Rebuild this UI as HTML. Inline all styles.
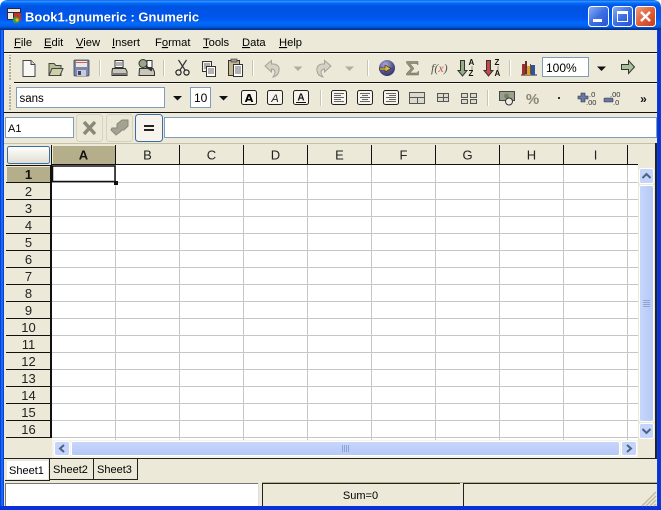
<!DOCTYPE html>
<html><head><meta charset="utf-8"><title>Book1.gnumeric : Gnumeric</title>
<style>
html,body{margin:0;padding:0;width:661px;height:510px;overflow:hidden;background:#fff}
svg{display:block;font-family:"Liberation Sans",sans-serif}
.c{shape-rendering:crispEdges}
.hd{font-size:13px;fill:#222;text-anchor:middle}
.m{font-size:11.2px;fill:#000}
.t{font-size:11px;fill:#000}
</style></head><body>
<svg width="661" height="510" viewBox="0 0 661 510" xmlns="http://www.w3.org/2000/svg">
<defs>
<linearGradient id="tb" x1="0" y1="0" x2="0" y2="1">
<stop offset="0" stop-color="#0058ee"/><stop offset=".04" stop-color="#3593ff"/><stop offset=".06" stop-color="#288eff"/><stop offset=".08" stop-color="#127dff"/><stop offset=".1" stop-color="#036ffc"/><stop offset=".14" stop-color="#0262ee"/><stop offset=".2" stop-color="#0057e5"/><stop offset=".24" stop-color="#0054e3"/><stop offset=".56" stop-color="#0055eb"/><stop offset=".66" stop-color="#005bf5"/><stop offset=".76" stop-color="#026afe"/><stop offset=".86" stop-color="#0062ef"/><stop offset=".92" stop-color="#0052d6"/><stop offset=".94" stop-color="#0040ab"/><stop offset="1" stop-color="#003092"/>
</linearGradient>
<linearGradient id="bl" x1="0" y1="0" x2="1" y2="1"><stop offset="0" stop-color="#8fb0f6"/><stop offset=".5" stop-color="#3c6fe4"/><stop offset="1" stop-color="#2a50d0"/></linearGradient>
<linearGradient id="rd" x1="0" y1="0" x2="1" y2="1"><stop offset="0" stop-color="#f0a080"/><stop offset=".5" stop-color="#e0603a"/><stop offset="1" stop-color="#c83818"/></linearGradient>
<linearGradient id="sbv" x1="0" y1="0" x2="1" y2="0"><stop offset="0" stop-color="#c8d6fb"/><stop offset="1" stop-color="#b4c8f6"/></linearGradient>
<linearGradient id="sbh" x1="0" y1="0" x2="0" y2="1"><stop offset="0" stop-color="#c8d6fb"/><stop offset="1" stop-color="#b4c8f6"/></linearGradient>
<linearGradient id="cb" x1="0" y1="0" x2="0" y2="1"><stop offset="0" stop-color="#fff"/><stop offset="1" stop-color="#e0ddd0"/></linearGradient>
<radialGradient id="gl" cx=".4" cy=".3" r=".8"><stop offset="0" stop-color="#b0b0d8"/><stop offset=".6" stop-color="#50508c"/><stop offset="1" stop-color="#2c2c58"/></radialGradient>
<pattern id="grip" width="3" height="3" patternUnits="userSpaceOnUse"><rect width="2" height="2" fill="#b5b09a"/></pattern>
</defs>

<!-- window frame -->
<path d="M0 30V8Q0 0 8 0H653Q661 0 661 8V30Z" fill="url(#tb)"/>
<g class="c">
<rect x="0" y="30" width="4" height="480" fill="#0a3fdc"/><rect x="1" y="30" width="2" height="476" fill="#166aee"/>
<rect x="657" y="30" width="4" height="480" fill="#0a3fdc"/><rect x="658" y="30" width="2" height="476" fill="#0831d9"/>
<rect x="0" y="506" width="661" height="4" fill="#0831d9"/>
<rect x="4" y="30" width="653" height="476" fill="#ece9d8"/>
</g>
<!-- title -->
<g>
<rect x="7" y="8" width="14" height="12" fill="#2a2a3a"/><rect x="8" y="9" width="12" height="3" fill="#e8e8e8"/><rect x="8" y="13" width="5" height="6" fill="#f0e8e0"/><rect x="14" y="13" width="7" height="8" fill="#c83020"/><circle cx="16" cy="20" r="3.4" fill="#3a9a3a"/><circle cx="17" cy="20" r="1.6" fill="#e8b020"/>
<text x="25.500" y="22" font-size="13" font-weight="bold" fill="#000" opacity=".35">Book1.gnumeric : Gnumeric</text>
<text x="25" y="21.500" font-size="13" font-weight="bold" fill="#fff">Book1.gnumeric : Gnumeric</text>
</g>
<!-- window buttons -->
<rect x="588.500" y="6.500" width="20" height="20" rx="3" fill="url(#bl)" stroke="#fff"/>
<rect x="593" y="19" width="9" height="3" fill="#fff"/>
<rect x="612.500" y="6.500" width="20" height="20" rx="3" fill="url(#bl)" stroke="#fff"/>
<rect x="617.500" y="11.500" width="10" height="10" fill="none" stroke="#fff"/><rect x="617" y="11" width="11" height="3" fill="#fff"/>
<rect x="635.500" y="6.500" width="20" height="20" rx="3" fill="url(#rd)" stroke="#fff"/>
<path d="M641 12L650 21M650 12L641 21" stroke="#fff" stroke-width="2.400"/>

<!-- menu -->
<text class="m" y="46"><tspan x="14"><tspan text-decoration="underline">F</tspan>ile</tspan><tspan x="44"><tspan text-decoration="underline">E</tspan>dit</tspan><tspan x="76"><tspan text-decoration="underline">V</tspan>iew</tspan><tspan x="112"><tspan text-decoration="underline">I</tspan>nsert</tspan><tspan x="155">F<tspan text-decoration="underline">o</tspan>rmat</tspan><tspan x="203"><tspan text-decoration="underline">T</tspan>ools</tspan><tspan x="242"><tspan text-decoration="underline">D</tspan>ata</tspan><tspan x="279"><tspan text-decoration="underline">H</tspan>elp</tspan></text>

<g class="c">
<rect x="4" y="52" width="653" height="1" fill="#111"/>
<rect x="4" y="53" width="653" height="1" fill="#fff" opacity=".6"/>
<rect x="14" y="82" width="643" height="1" fill="#111"/>
<rect x="14" y="83" width="643" height="1" fill="#fff" opacity=".6"/>
<rect x="4" y="112" width="653" height="1" fill="#111"/>
<rect x="8" y="55" width="3" height="25" fill="url(#grip)"/>
<rect x="8" y="85" width="3" height="25" fill="url(#grip)"/>
<g fill="#c8c4ae"><rect x="99" y="60" width="1" height="16"/><rect x="163" y="60" width="1" height="16"/><rect x="252" y="60" width="1" height="16"/><rect x="367" y="60" width="1" height="16"/><rect x="509" y="60" width="1" height="16"/><rect x="487" y="90" width="1" height="16"/><rect x="320" y="90" width="1" height="16"/></g>
<g fill="#fff"><rect x="100" y="60" width="1" height="16"/><rect x="164" y="60" width="1" height="16"/><rect x="253" y="60" width="1" height="16"/><rect x="368" y="60" width="1" height="16"/><rect x="510" y="60" width="1" height="16"/><rect x="321" y="90" width="1" height="16"/><rect x="488" y="90" width="1" height="16"/></g>
</g>

<!-- toolbar 1 icons -->
<path d="M23 60.500H31L35 64.500V76.500H23Z" fill="#f8f8f4" stroke="#444"/><path d="M31 60.500V64.500H35" fill="#ddd" stroke="#444"/>
<path d="M49 63.500H54L56 65.500H61V75.500H49Z" fill="#b8bc94" stroke="#444"/><path d="M49 75.500L52 68.500H63L60 75.500Z" fill="#cdd1a8" stroke="#444"/>
<rect x="74" y="60" width="15" height="16" rx="1" fill="#7888b0" stroke="#444" stroke-width=".8"/><rect x="76" y="61" width="11" height="6" fill="#f0e8e0"/><rect x="76" y="62" width="11" height="1" fill="#d86050"/><rect x="77" y="70" width="9" height="6" fill="#c8ccd8"/><rect x="78" y="71" width="3" height="4" fill="#445"/>
<!-- print -->
<rect x="115" y="60.500" width="8" height="7" fill="#fff" stroke="#333"/><path d="M116 63H122M116 65H122" stroke="#666"/><path d="M112.500 68.500H125.500L127 71.500V75.500H112V71.500Z" fill="#c8c6b8" stroke="#333"/><rect x="113" y="73" width="13" height="2" fill="#777"/>
<!-- preview -->
<path d="M139.500 68.500H153L154.500 72V75.500H139Z" fill="#c8c6b8" stroke="#333"/><rect x="147" y="60.500" width="5" height="7" fill="#fff" stroke="#333"/><circle cx="143" cy="63.500" r="4" fill="#9aa58a" stroke="#333"/><path d="M146 66.500L152 70.500" stroke="#333" stroke-width="2"/>
<!-- cut -->
<path d="M178.500 60L185 70M186.500 60L180 70" stroke="#333" stroke-width="1.200" fill="none"/><circle cx="178.500" cy="72.500" r="2.600" fill="none" stroke="#111" stroke-width="1.100"/><circle cx="186.500" cy="72.500" r="2.600" fill="none" stroke="#111" stroke-width="1.100"/>
<!-- copy -->
<rect x="202.500" y="61.500" width="9" height="10" fill="#f4f2e8" stroke="#333"/><path d="M204 64H210M204 66H210M204 68H210" stroke="#666"/><rect x="206.500" y="66.500" width="9" height="10" fill="#fff" stroke="#333"/><path d="M208 69H214M208 71H214M208 73H214" stroke="#666"/>
<!-- paste -->
<rect x="228.500" y="60.500" width="11" height="15" fill="#c8b890" stroke="#333"/><rect x="231" y="59" width="6" height="3" fill="#999" stroke="#333" stroke-width=".6"/><rect x="233.500" y="64.500" width="9" height="12" fill="#fff" stroke="#333"/><path d="M235 67H241M235 69H241M235 71H241M235 73H241" stroke="#666"/>
<!-- undo / redo -->
<path d="M265 66L271.500 60.500V64H274Q280 65 279 71Q278 76 273 77Q276 73 274.500 70.500Q273.500 69 271.500 69V72Z" fill="#d4d2c4" stroke="#a4a294"/>
<path d="M331 66L324.500 60.500V64H322Q316 65 317 71Q318 76 323 77Q320 73 321.500 70.500Q322.500 69 324.500 69V72Z" fill="#d4d2c4" stroke="#a4a294"/>
<path d="M293.500 66.500H302.500L298 71Z" fill="#b0ae9e"/><path d="M345 66.500H354L349.500 71Z" fill="#b0ae9e"/>
<!-- globe -->
<circle cx="387" cy="68" r="8" fill="url(#gl)"/><path d="M379.500 68H385V65L391 68.500L385 72V70H379.500Z" fill="#e0b830" stroke="#222" stroke-width=".6"/>
<!-- sigma -->
<path d="M406.500 61.500H418V65L416.500 63.500H410L414 68.500L410 73H417L418.500 71V75H406.500V73.500L411 68.500L406.500 63Z" fill="#94927c" stroke="#66644f" stroke-width=".5"/>
<text x="431" y="72" font-family="Liberation Serif,serif" font-size="12" font-style="italic" fill="#55554a">f<tspan>(</tspan><tspan fill="#c05050">x</tspan><tspan>)</tspan></text>
<!-- sort -->
<path d="M460.500 60.500H464.500V70.500H467L462.500 76L458 70.500H460.500Z" fill="#98ac88" stroke="#333"/>
<text x="468.500" y="65" font-size="8" font-weight="bold" fill="#111">A</text><text x="468.500" y="76" font-size="8" font-weight="bold" fill="#111">Z</text><path d="M472 66.500V70" stroke="#333" stroke-dasharray="1 1"/>
<path d="M486.500 60.500H490.500V70.500H493L488.500 76L484 70.500H486.500Z" fill="#c84848" stroke="#333"/>
<text x="494.500" y="65" font-size="8" font-weight="bold" fill="#111">Z</text><text x="494.500" y="76" font-size="8" font-weight="bold" fill="#111">A</text><path d="M498 66.500V70" stroke="#333" stroke-dasharray="1 1"/>
<!-- chart -->
<g class="c"><rect x="521" y="74" width="16" height="2" fill="#888"/><rect x="522" y="64" width="3" height="11" fill="#a03030"/><rect x="525" y="61" width="2" height="13" fill="#603030"/><rect x="527" y="66" width="3" height="9" fill="#e0a020"/><rect x="530" y="64" width="1" height="10" fill="#705020"/><rect x="531" y="65" width="4" height="10" fill="#3050a0"/></g>
<!-- zoom entry -->
<rect x="542.500" y="57.500" width="46" height="19" fill="#fff" stroke="#7f9db9"/>
<text x="546" y="72" font-size="12" fill="#000">100%</text>
<path d="M597 66.500H606L601.500 71Z" fill="#111"/>
<path d="M621.500 64.500H628.500V60.500L634.500 67L628.500 73.500V69.500H621.500Z" fill="#a8c098" stroke="#333"/>

<!-- toolbar 2 -->
<rect x="16.500" y="87.500" width="148" height="20" fill="#fff" stroke="#7f9db9"/>
<text x="19.500" y="102" font-size="11.500" fill="#000">sans</text>
<path d="M173 96H182L177.500 100.500Z" fill="#111"/>
<rect x="190.500" y="87.500" width="20" height="20" fill="#fff" stroke="#7f9db9"/>
<text x="194" y="102" font-size="12" fill="#000">10</text>
<path d="M219 96H228L223.500 100.500Z" fill="#111"/>
<g fill="#f6f4ec" stroke="#222"><rect x="241.500" y="90.500" width="15" height="14" rx="2"/><rect x="267.500" y="90.500" width="15" height="14" rx="2"/><rect x="293.500" y="90.500" width="15" height="14" rx="2"/></g>
<text x="249" y="102" font-size="11" font-weight="bold" text-anchor="middle" fill="#000" font-family="DejaVu Sans,sans-serif">A</text>
<text x="275" y="102" font-size="11" font-style="italic" text-anchor="middle" fill="#222">A</text>
<text x="301" y="100.500" font-size="10" text-anchor="middle" fill="#111" font-weight="bold">A</text><rect x="296" y="102" width="10" height="1" fill="#111" class="c"/>
<g fill="#f6f4ec" stroke="#222"><rect x="331.500" y="90.500" width="15" height="14" rx="2"/><rect x="357.500" y="90.500" width="15" height="14" rx="2"/><rect x="383.500" y="90.500" width="15" height="14" rx="2"/></g>
<g stroke="#666" class="c"><path d="M334 93.500H344M334 95.500H341M334 97.500H344M334 99.500H341M334 101.500H344"/><path d="M360 93.500H370M362 95.500H368M360 97.500H370M362 99.500H368M360 101.500H370"/><path d="M386 93.500H396M389 95.500H396M386 97.500H396M389 99.500H396M386 101.500H396"/></g>
<g class="c" fill="#dcdacc" stroke="#555">
<rect x="409.500" y="92.500" width="15" height="11"/><path d="M409.500 97.500H424.500M417.500 97.500V103.500" fill="none"/>
<rect x="437.500" y="93.500" width="11" height="8"/><path d="M437.500 97.500H448.500M443.500 93.500V101.500" fill="none"/>
<rect x="461.500" y="93.500" width="6" height="4"/><rect x="470.500" y="93.500" width="6" height="4"/><rect x="461.500" y="99.500" width="6" height="4"/><rect x="470.500" y="99.500" width="6" height="4"/>
</g>
<!-- money -->
<rect x="499.500" y="91.500" width="15" height="9" fill="#98a088" stroke="#445"/><circle cx="506.500" cy="96" r="2.500" fill="#787f68"/><circle cx="509" cy="101.500" r="3.500" fill="#f0eee2" stroke="#333"/>
<text x="532.500" y="104" font-size="15" text-anchor="middle" fill="#8a8678" font-weight="bold">%</text>
<rect x="558" y="97" width="2" height="2" fill="#333" class="c"/>
<!-- inc/dec decimals -->
<path d="M578 96H581V93H585V96H588V99H585V102H581V99H578Z" fill="#6878a0" stroke="#334" stroke-width=".6"/>
<text x="589" y="97" font-size="7.500" fill="#333">.0</text><text x="586" y="105" font-size="7.500" fill="#333">.00</text>
<rect x="604" y="98" width="9" height="4" rx="1" fill="#6878a0" stroke="#334" stroke-width=".6"/>
<text x="610" y="97" font-size="7.500" fill="#333">.00</text><text x="613" y="105" font-size="7.500" fill="#333">.0</text>
<text x="643.500" y="103" font-size="12" font-weight="bold" text-anchor="middle" fill="#111">»</text>

<!-- formula row -->
<rect x="5.500" y="117.500" width="68" height="20" fill="#fff" stroke="#7f9db9"/>
<text x="8" y="132" font-size="11" fill="#000">A1</text>
<rect x="76.500" y="114.500" width="26" height="27" rx="3" fill="#ece9d8" stroke="#d6d2c0"/>
<path d="M84 122L95 134M95 122L84 134" stroke="#8a8876" stroke-width="3.500"/>
<rect x="106.500" y="114.500" width="26" height="27" rx="3" fill="#ece9d8" stroke="#d6d2c0"/>
<path d="M128 120H122L117 124V128H112L111 130L116 135L120 132L122 130H124L128 126Z" fill="#a4a292" stroke="#8a8876"/>
<rect x="135.500" y="114.500" width="27" height="27" rx="3" fill="#f6f4ec" stroke="#3a6ea5"/>
<rect x="144" y="125" width="10" height="2" fill="#222" class="c"/><rect x="144" y="129" width="10" height="2" fill="#222" class="c"/>
<rect x="164.500" y="117.500" width="492" height="20" fill="#fff" stroke="#7f9db9"/>

<!-- grid frame -->
<g class="c">
<rect x="4" y="143" width="653" height="1" fill="#c4c0ac"/>
<rect x="52" y="165" width="586" height="275" fill="#fff"/>
<g fill="#c6c6c6">
<rect x="52" y="182" width="586" height="1"/><rect x="52" y="199" width="586" height="1"/><rect x="52" y="216" width="586" height="1"/><rect x="52" y="233" width="586" height="1"/><rect x="52" y="250" width="586" height="1"/><rect x="52" y="267" width="586" height="1"/><rect x="52" y="284" width="586" height="1"/><rect x="52" y="301" width="586" height="1"/><rect x="52" y="318" width="586" height="1"/><rect x="52" y="335" width="586" height="1"/><rect x="52" y="352" width="586" height="1"/><rect x="52" y="369" width="586" height="1"/><rect x="52" y="386" width="586" height="1"/><rect x="52" y="403" width="586" height="1"/><rect x="52" y="420" width="586" height="1"/><rect x="52" y="437" width="586" height="1"/>
<rect x="115" y="165" width="1" height="275"/><rect x="179" y="165" width="1" height="275"/><rect x="243" y="165" width="1" height="275"/><rect x="307" y="165" width="1" height="275"/><rect x="371" y="165" width="1" height="275"/><rect x="435" y="165" width="1" height="275"/><rect x="499" y="165" width="1" height="275"/><rect x="563" y="165" width="1" height="275"/><rect x="627" y="165" width="1" height="275"/>
</g>
<!-- col header -->
<rect x="52" y="164" width="586" height="1" fill="#111"/>
<rect x="53" y="146" width="62" height="18" fill="#b5ae8a"/>
<rect x="51" y="145" width="1" height="20" fill="#111"/><rect x="115" y="145" width="1" height="19" fill="#111"/><rect x="179" y="145" width="1" height="19" fill="#111"/><rect x="243" y="145" width="1" height="19" fill="#111"/><rect x="307" y="145" width="1" height="19" fill="#111"/><rect x="371" y="145" width="1" height="19" fill="#111"/><rect x="435" y="145" width="1" height="19" fill="#111"/><rect x="499" y="145" width="1" height="19" fill="#111"/><rect x="563" y="145" width="1" height="19" fill="#111"/><rect x="627" y="145" width="1" height="19" fill="#111"/>
<!-- row header -->
<rect x="50" y="165" width="2" height="273" fill="#111"/>
<rect x="7" y="167" width="43" height="15" fill="#b5ae8a"/>
<g fill="#111"><rect x="6" y="165" width="44" height="1"/><rect x="6" y="182" width="44" height="1"/><rect x="6" y="199" width="44" height="1"/><rect x="6" y="216" width="44" height="1"/><rect x="6" y="233" width="44" height="1"/><rect x="6" y="250" width="44" height="1"/><rect x="6" y="267" width="44" height="1"/><rect x="6" y="284" width="44" height="1"/><rect x="6" y="301" width="44" height="1"/><rect x="6" y="318" width="44" height="1"/><rect x="6" y="335" width="44" height="1"/><rect x="6" y="352" width="44" height="1"/><rect x="6" y="369" width="44" height="1"/><rect x="6" y="386" width="44" height="1"/><rect x="6" y="403" width="44" height="1"/><rect x="6" y="420" width="44" height="1"/><rect x="6" y="437" width="44" height="1"/></g>
</g>
<rect x="7.500" y="146.500" width="42" height="17" rx="2" fill="url(#cb)" stroke="#3a6ea5"/>
<g class="hd"><text x="83.500" y="159.500" font-weight="bold" fill="#111">A</text><text x="147.500" y="159.500">B</text><text x="211.500" y="159.500">C</text><text x="275.500" y="159.500">D</text><text x="339.500" y="159.500">E</text><text x="403.500" y="159.500">F</text><text x="467.500" y="159.500">G</text><text x="531.500" y="159.500">H</text><text x="595.500" y="159.500">I</text></g>
<g class="hd"><text x="28.500" y="179" font-weight="bold" fill="#111">1</text><text x="28.500" y="196">2</text><text x="28.500" y="213">3</text><text x="28.500" y="230">4</text><text x="28.500" y="247">5</text><text x="28.500" y="264">6</text><text x="28.500" y="281">7</text><text x="28.500" y="298">8</text><text x="28.500" y="315">9</text><text x="28.500" y="332">10</text><text x="28.500" y="349">11</text><text x="28.500" y="366">12</text><text x="28.500" y="383">13</text><text x="28.500" y="400">14</text><text x="28.500" y="417">15</text><text x="28.500" y="434">16</text></g>
<!-- cursor -->
<rect x="52.500" y="166" width="62.500" height="15.500" fill="#fff" stroke="#111" stroke-width="1.500"/>
<rect x="114" y="181" width="4" height="4" fill="#111" class="c"/>

<!-- scrollbars -->
<g class="c"><rect x="638" y="165" width="17" height="275" fill="#ece9d8"/><rect x="52" y="440" width="603" height="18" fill="#f6f4ea"/><rect x="638" y="440" width="18" height="18" fill="#ece9d8"/><rect x="655" y="143" width="2" height="316" fill="#222"/><rect x="4" y="458" width="653" height="1" fill="#222"/></g>
<rect x="639.500" y="168.500" width="14" height="15" rx="2" fill="#c5d4fb" stroke="#fff"/>
<path d="M642.500 178L646.500 174L650.500 178" fill="none" stroke="#4d6185" stroke-width="2"/>
<rect x="639.500" y="185.500" width="14" height="236" rx="2" fill="url(#sbv)" stroke="#fff"/>
<g class="c" fill="#8ea4d8"><rect x="643" y="300" width="7" height="1"/><rect x="643" y="302" width="7" height="1"/><rect x="643" y="304" width="7" height="1"/><rect x="643" y="306" width="7" height="1"/></g>
<rect x="639.500" y="423.500" width="14" height="15" rx="2" fill="#c5d4fb" stroke="#fff"/>
<path d="M642.500 429L646.500 433L650.500 429" fill="none" stroke="#4d6185" stroke-width="2"/>
<rect x="54.500" y="441.500" width="15" height="14" rx="2" fill="#c5d4fb" stroke="#fff"/>
<path d="M64 445L60 448.500L64 452" fill="none" stroke="#4d6185" stroke-width="2"/>
<rect x="71.500" y="441.500" width="548" height="14" rx="2" fill="url(#sbh)" stroke="#fff"/>
<g class="c" fill="#8ea4d8"><rect x="342" y="445" width="1" height="7"/><rect x="344" y="445" width="1" height="7"/><rect x="346" y="445" width="1" height="7"/><rect x="348" y="445" width="1" height="7"/></g>
<rect x="621.500" y="441.500" width="15" height="14" rx="2" fill="#c5d4fb" stroke="#fff"/>
<path d="M627 445L631 448.500L627 452" fill="none" stroke="#4d6185" stroke-width="2"/>

<!-- tabs -->
<g class="c">
<rect x="7" y="461" width="41" height="18" fill="#fff"/>
<rect x="49" y="459" width="1" height="22" fill="#222"/><rect x="5" y="480" width="45" height="1" fill="#222"/>
<rect x="93" y="459" width="1" height="21" fill="#222"/><rect x="50" y="479" width="44" height="1" fill="#222"/>
<rect x="137" y="459" width="1" height="21" fill="#222"/><rect x="94" y="479" width="44" height="1" fill="#222"/>
</g>
<text class="t" x="9" y="474">Sheet1</text>
<text class="t" x="53" y="473">Sheet2</text>
<text class="t" x="97" y="473">Sheet3</text>

<!-- status bar -->
<g class="c">
<rect x="5" y="483" width="254" height="23" fill="#fff"/>
<rect x="5" y="483" width="254" height="1" fill="#777"/><rect x="5" y="483" width="1" height="23" fill="#777"/><rect x="258" y="483" width="1" height="23" fill="#ddd"/>
<rect x="262" y="483" width="198" height="1" fill="#222"/><rect x="262" y="483" width="1" height="23" fill="#222"/>
<rect x="463" y="483" width="194" height="1" fill="#222"/><rect x="463" y="483" width="1" height="23" fill="#222"/>
<rect x="262" y="482" width="395" height="1" fill="#b5ae8a"/>
</g>
<text x="360.500" y="499" font-size="11" text-anchor="middle" fill="#000">Sum=0</text>
<path d="M642 506L656 492M646 506L656 496M650 506L656 500M654 506L656 504" stroke="#c0bca4" stroke-width="1.500"/>
</svg>
</body></html>
